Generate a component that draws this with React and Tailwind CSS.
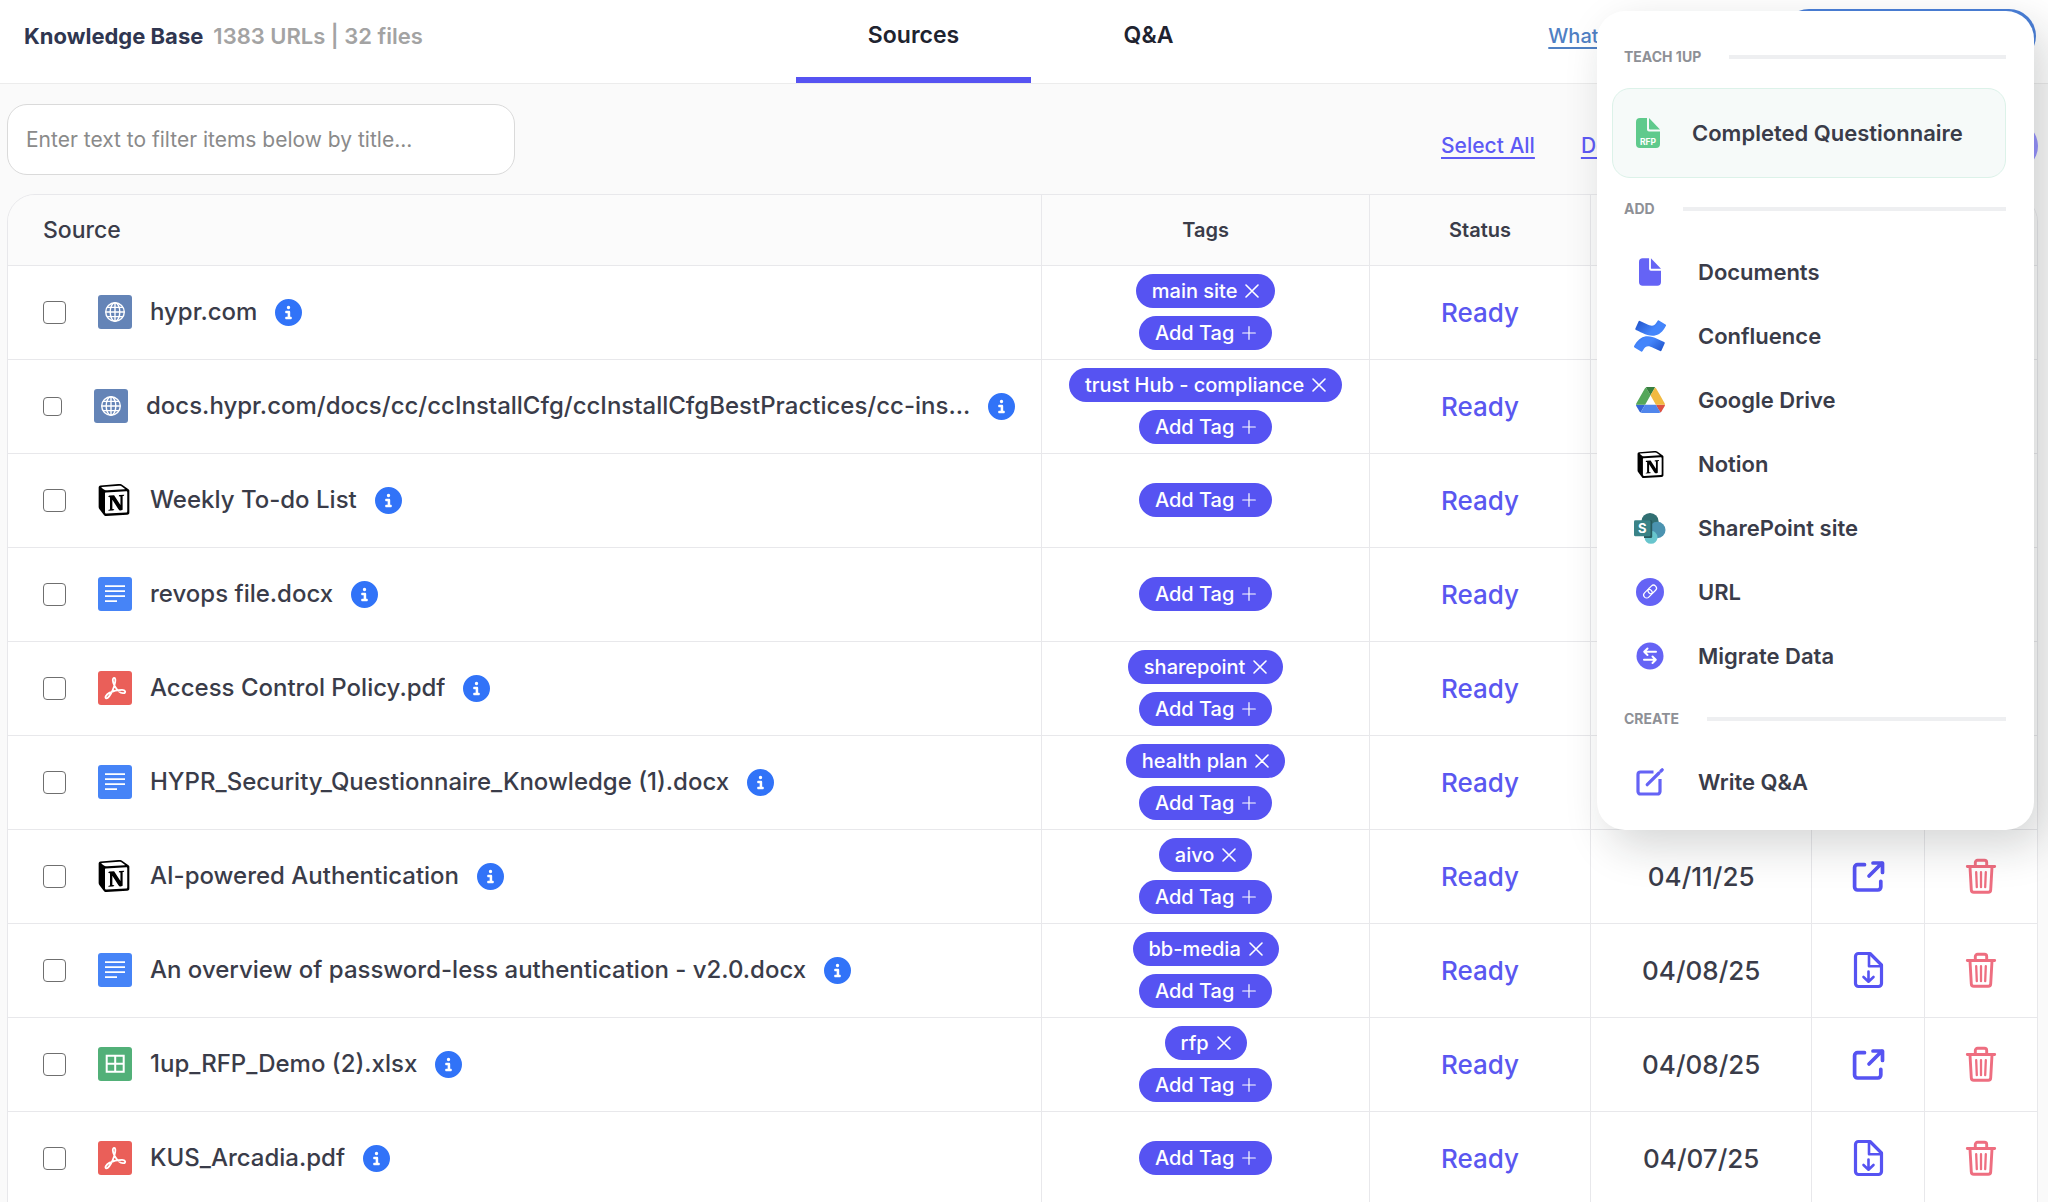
import React from 'react';
import { FaCircleInfo } from 'react-icons/fa6';
import { SiNotion, SiConfluence } from 'react-icons/si';

function GlobeIcon() {
  return (
    <svg viewBox="0 0 34 34" className="size-[34px] shrink-0" aria-hidden="true">
      <rect width="34" height="34" rx="3" fill="#6484b7" />
      <g fill="none" stroke="#fff" strokeWidth="1.4">
        <circle cx="17" cy="17" r="9.3" />
        <ellipse cx="17" cy="17" rx="4.8" ry="9.3" />
        <path d="M17 7.7v18.6M7.7 17h18.6M9 12.4h16M9 21.6h16" />
      </g>
    </svg>
  );
}

function DocIcon() {
  return (
    <svg viewBox="0 0 34 34" className="size-[34px] shrink-0" aria-hidden="true">
      <rect width="34" height="34" rx="3" fill="#4684f7" />
      <path d="M7 9.2h20M7 14.2h20M7 19.2h20M7 24.2h12" stroke="#fff" strokeWidth="1.8" />
    </svg>
  );
}

function PdfIcon() {
  return (
    <svg viewBox="0 0 34 34" className="size-[34px] shrink-0" aria-hidden="true">
      <rect width="34" height="34" rx="3" fill="#ea5f59" />
      <path
        d="M16.3 7c-2.2 0-1.8 4 .2 7.6s5.5 7.9 8.8 7.6 2-3.4-1.3-3.4c-4.5 0-9.6 1.4-12.7 3.1s-4.8 4.9-3.2 5.4 4.6-3.7 6.6-8.2S18.6 7 16.3 7z"
        fill="none"
        stroke="#fff"
        strokeWidth="1.8"
        strokeLinejoin="round"
      />
    </svg>
  );
}

function SheetIcon() {
  return (
    <svg viewBox="0 0 34 34" className="size-[34px] shrink-0" aria-hidden="true">
      <rect width="34" height="34" rx="3" fill="#52b078" />
      <path d="M8.7 8.8h17v16h-17zM17.2 8.8v16M8.7 16.8h17" fill="none" stroke="#fff" strokeWidth="2" />
    </svg>
  );
}

function NotionIcon() {
  return (
    <span className="flex size-[34px] shrink-0 items-center">
      <SiNotion className="size-8 text-black" aria-hidden="true" />
    </span>
  );
}

const sourceIcons = { web: GlobeIcon, notion: NotionIcon, doc: DocIcon, pdf: PdfIcon, sheet: SheetIcon };

function OpenIcon() {
  return (
    <svg viewBox="0 0 33 33" className="size-[33px]" fill="none" stroke="#5653f2" strokeWidth="3.7" strokeLinecap="round" strokeLinejoin="round" aria-hidden="true">
      <path d="M12.5 4.7H5.6a3 3 0 0 0-3 3V27a3 3 0 0 0 3 3h20.2a3 3 0 0 0 3-3v-5.7" />
      <path d="M17 16 30 3M21 3h9.500v9.400" />
    </svg>
  );
}

function DownloadIcon() {
  return (
    <svg viewBox="0 0 31 38" className="h-[38px] w-[31px]" fill="none" stroke="#5653f2" strokeWidth="3.2" strokeLinecap="round" strokeLinejoin="round" aria-hidden="true">
      <path d="M5.5 2.500h11.500L28.500 14v18.500a3 3 0 0 1-3 3h-20a3 3 0 0 1-3-3v-27a3 3 0 0 1 3-3z" />
      <path d="M16 3v12.2h12" strokeWidth="2.6" />
      <path d="M15.500 20.500v10M10.500 26l5 4.700 5-4.700" strokeWidth="2.6" />
    </svg>
  );
}

function TrashIcon() {
  return (
    <svg viewBox="0 0 32 37" className="h-[37px] w-8" fill="none" stroke="#ee6e80" strokeWidth="2.9" strokeLinecap="round" strokeLinejoin="round" aria-hidden="true">
      <path d="M2.300 8.500h27.400M10.300 8V4.500a2.200 2.200 0 0 1 2.200-2.200h7a2.200 2.200 0 0 1 2.200 2.200V8M5 9l1.300 22.800a2.500 2.500 0 0 0 2.500 2.500h14.400a2.500 2.500 0 0 0 2.500-2.500L27 9" />
      <path d="M11.200 14.200l.6 15M16 14.200v15M20.800 14.200l-.6 15" strokeWidth="2.3" />
    </svg>
  );
}

function FileShape({ color, label, className }) {
  return (
    <svg viewBox="0 0 24 30" className={className} aria-hidden="true">
      <path d="M4 0h7v11.500a2 2 0 0 0 2 2h11V26a4 4 0 0 1-4 4H4a4 4 0 0 1-4-4V4a4 4 0 0 1 4-4z" fill={color} />
      <path d="M13 0l11 11.500H14a1 1 0 0 1-1-1z" fill={color} />
      {label && (
        <text x="12" y="27" textAnchor="middle" fontSize="8.500" fontWeight="700" fontFamily="Inter, sans-serif" fill="#fff">
          {label}
        </text>
      )}
    </svg>
  );
}

function ConfluenceIcon() {
  return (
    <>
      <svg width="0" height="0" className="absolute" aria-hidden="true">
        <linearGradient id="confluence" x1="0" y1="0" x2="1" y2="1">
          <stop offset="0.1" stopColor="#2459d0" />
          <stop offset="0.45" stopColor="#4485fb" />
          <stop offset="0.6" stopColor="#4485fb" />
          <stop offset="0.9" stopColor="#2459d0" />
        </linearGradient>
      </svg>
      <SiConfluence className="size-8" style={{ fill: 'url(#confluence)' }} aria-hidden="true" />
    </>
  );
}

function DriveIcon() {
  return (
    <svg viewBox="0 0 87.3 78" className="h-[26px] w-[29px]" aria-hidden="true">
      <path d="m6.600 66.850 3.850 6.650c.8 1.400 1.950 2.500 3.300 3.300l13.750-23.800h-27.500c0 1.550.4 3.100 1.200 4.500z" fill="#3567d6" />
      <path d="m43.650 25-13.750-23.800c-1.350.8-2.500 1.900-3.300 3.300l-25.400 44a9.060 9.060 0 0 0 -1.200 4.500h27.500z" fill="#55a75a" />
      <path d="m73.550 76.800c1.350-.8 2.500-1.900 3.300-3.300l1.600-2.750 7.650-13.250c.8-1.400 1.200-2.950 1.200-4.500h-27.502l5.852 11.500z" fill="#dd5144" />
      <path d="m43.650 25 13.750-23.800c-1.350-.8-2.900-1.200-4.500-1.200h-18.500c-1.600 0-3.150.450-4.500 1.200z" fill="#377f3f" />
      <path d="m59.800 53h-32.300l-13.750 23.800c1.350.8 2.900 1.200 4.500 1.200h50.800c1.600 0 3.150-.450 4.500-1.200z" fill="#5086ec" />
      <path d="m73.400 26.500-12.700-22c-.8-1.400-1.950-2.500-3.300-3.300l-13.750 23.800 16.150 28h27.450c0-1.550-.4-3.100-1.200-4.500z" fill="#f2ba42" />
    </svg>
  );
}

function SharePointIcon() {
  return (
    <svg viewBox="0 0 32 31" className="h-[31px] w-8" aria-hidden="true">
      <circle cx="16" cy="8.700" r="8.700" fill="#316f72" />
      <circle cx="23.300" cy="17" r="8.200" fill="#4b93b0" />
      <circle cx="17" cy="24.300" r="6.500" fill="#68c5cd" />
      <path d="M10 7.300h6.800a1.400 1.400 0 0 1 1.400 1.400v15a1.400 1.400 0 0 1-1.400 1.400H10z" fill="#275a5e" />
      <rect x="0" y="7.300" width="16.500" height="16" rx="1.400" fill="#3a8387" />
      <text x="8.200" y="19.800" textAnchor="middle" fontSize="13" fontWeight="700" fontFamily="Inter, sans-serif" fill="#fff">
        S
      </text>
    </svg>
  );
}

function UrlIcon() {
  return (
    <svg viewBox="0 0 28 28" className="size-7" aria-hidden="true">
      <circle cx="14" cy="14" r="14" fill="#6563f5" />
      <g fill="none" stroke="#fff" strokeWidth="1.2" transform="rotate(-45 14 13.5)">
        <rect x="6.200" y="10.600" width="9.500" height="6" rx="3" />
        <rect x="12.300" y="10.600" width="9.500" height="6" rx="3" />
      </g>
    </svg>
  );
}

function MigrateIcon() {
  return (
    <svg viewBox="0 0 28 28" className="size-7" aria-hidden="true">
      <circle cx="14" cy="14" r="13.500" fill="#6563f5" />
      <path d="M20 9.700H8.200M11.500 6.500 8.200 9.700l3.300 3.300M8 17.700h11.800M16.500 14.500l3.300 3.200-3.300 3.300" fill="none" stroke="#fff" strokeWidth="2" strokeLinecap="round" strokeLinejoin="round" />
    </svg>
  );
}

function WriteIcon() {
  return (
    <svg viewBox="0 0 28 28" className="size-7" fill="none" stroke="#6563f5" strokeWidth="3.2" strokeLinejoin="round" aria-hidden="true">
      <path d="M17.500 4H4.500a2.500 2.500 0 0 0-2.500 2.500v17A2.500 2.500 0 0 0 4.500 26h17a2.500 2.500 0 0 0 2.500-2.500V11" />
      <path d="M11.200 16.700 23 5" strokeLinecap="round" />
      <path d="m25 3 1.200-1.200" strokeLinecap="round" />
    </svg>
  );
}

const rows = [
  { name: 'hypr.com', icon: 'web', tag: 'main site', action: 'open' },
  { name: 'docs.hypr.com/docs/cc/ccInstallCfg/ccInstallCfgBestPractices/cc-ins...', icon: 'web', tag: 'trust Hub - compliance', action: 'open', compact: true },
  { name: 'Weekly To-do List', icon: 'notion', action: 'open' },
  { name: 'revops file.docx', icon: 'doc', action: 'download' },
  { name: 'Access Control Policy.pdf', icon: 'pdf', tag: 'sharepoint', action: 'download' },
  { name: 'HYPR_Security_Questionnaire_Knowledge (1).docx', icon: 'doc', tag: 'health plan', action: 'download' },
  { name: 'AI-powered Authentication', icon: 'notion', tag: 'aivo', date: '04/11/25', action: 'open' },
  { name: 'An overview of password-less authentication - v2.0.docx', icon: 'doc', tag: 'bb-media', date: '04/08/25', action: 'download' },
  { name: '1up_RFP_Demo (2).xlsx', icon: 'sheet', tag: 'rfp', date: '04/08/25', action: 'open' },
  { name: 'KUS_Arcadia.pdf', icon: 'pdf', date: '04/07/25', action: 'download' },
];

const addItems = [
  ['Documents', <FileShape key="i" color="#6563f5" className="h-7 w-[22px]" />],
  ['Confluence', <ConfluenceIcon key="i" />],
  ['Google Drive', <DriveIcon key="i" />],
  ['Notion', <SiNotion key="i" className="size-[27px] text-black" aria-hidden="true" />],
  ['SharePoint site', <SharePointIcon key="i" />],
  ['URL', <UrlIcon key="i" />],
  ['Migrate Data', <MigrateIcon key="i" />],
];

function PlusIcon() {
  return (
    <svg viewBox="0 0 14 14" className="size-3.5" stroke="#fff" strokeWidth="1.2" strokeLinecap="round" aria-hidden="true">
      <path d="M7 .700v12.600M.700 7h12.600" />
    </svg>
  );
}

function CloseIcon() {
  return (
    <svg viewBox="0 0 14 14" className="size-3.5" stroke="#fff" strokeWidth="1.600" strokeLinecap="round" aria-hidden="true">
      <path d="M1 1l12 12M13 1 1 13" />
    </svg>
  );
}

function SourceRow({ row }) {
  const Icon = sourceIcons[row.icon];
  return (
    <tr className="h-[94px] border-t border-[#e8e8eb] bg-white">
      <td className="pr-4 pl-[35px]">
        <div className="flex items-center gap-[18px]">
          <input
            type="checkbox"
            aria-label={`Select ${row.name}`}
            className={`${row.compact ? 'size-[19px]' : 'size-[23px]'} mr-3.5 shrink-0 appearance-none rounded border border-[#6f6f6f] bg-white`}
          />
          <Icon />
          <span className="truncate text-2xl font-medium">{row.name}</span>
          <button type="button" aria-label="Source details" className="shrink-0 text-[#3173f8]">
            <FaCircleInfo className="size-[27px]" />
          </button>
        </div>
      </td>
      <td className="border-l border-[#e8e8eb]">
        <div className="flex flex-col items-center gap-2">
          {row.tag && (
            <span className="flex h-[34px] items-center gap-2 rounded-full bg-[#5653f2] px-4 text-xl font-medium text-white">
              {row.tag}
              <button type="button" aria-label={`Remove tag ${row.tag}`}>
                <CloseIcon />
              </button>
            </span>
          )}
          <button type="button" className="flex h-[34px] items-center gap-2 rounded-full bg-[#5653f2] px-4 text-xl font-medium text-white">
            Add Tag
            <PlusIcon />
          </button>
        </div>
      </td>
      <td className="border-l border-[#e8e8eb] text-center text-[26px] font-medium text-[#5a57f0]">Ready</td>
      <td className="border-l border-[#e8e8eb] text-center text-[26px] font-medium">{row.date}</td>
      <td className="border-l border-[#e8e8eb]">
        <button type="button" aria-label={row.action === 'open' ? 'Open source' : 'Download source'} className="mx-auto block">
          {row.action === 'open' ? <OpenIcon /> : <DownloadIcon />}
        </button>
      </td>
      <td className="border-l border-[#e8e8eb]">
        <button type="button" aria-label="Delete source" className="mx-auto block">
          <TrashIcon />
        </button>
      </td>
    </tr>
  );
}

function SectionLabel({ children }) {
  return (
    <div className="mr-7 ml-[27px] flex h-6 items-center gap-7">
      <span className="text-sm font-bold text-[#8e9096]">{children}</span>
      <span className="h-1 flex-1 bg-[#eeeff1]" />
    </div>
  );
}

function MenuItem({ icon, children }) {
  return (
    <button type="button" role="menuitem" className="flex h-16 w-full items-center gap-8 pl-[37px] text-left text-[22px] font-semibold">
      <span className="flex w-8 shrink-0 items-center justify-center">{icon}</span>
      {children}
    </button>
  );
}

function AddMenu() {
  return (
    <div role="menu" className="absolute top-[11px] right-3.5 z-10 w-[437px] rounded-[28px] bg-white pt-[34px] pb-4 shadow-[12px_16px_44px_rgba(20,30,30,0.18)]">
      <SectionLabel>TEACH 1UP</SectionLabel>
      <div className="my-[19px] mr-7 ml-[15px]">
        <button type="button" role="menuitem" className="flex h-[90px] w-full items-center gap-8 rounded-[18px] border border-[#dcf2e9] bg-[#f6faf9] pl-[23px] text-left text-[22px] font-semibold">
          <FileShape color="#5fca8c" label="RFP" className="h-[30px] w-6" />
          Completed Questionnaire
        </button>
      </div>
      <SectionLabel>ADD</SectionLabel>
      <div className="my-[19px]">
        {addItems.map(([label, icon]) => (
          <MenuItem key={label} icon={icon}>
            {label}
          </MenuItem>
        ))}
      </div>
      <SectionLabel>CREATE</SectionLabel>
      <div className="mt-[19px]">
        <MenuItem icon={<WriteIcon />}>Write Q&amp;A</MenuItem>
      </div>
    </div>
  );
}

export default function App() {
  return (
    <div className="relative h-screen overflow-hidden bg-[#fafafa] font-['Inter',sans-serif] text-[#3a3c49]">
      <header className="grid h-[84px] grid-cols-[1fr_auto_1fr] border-b border-[#ececec] bg-white">
        <h1 className="flex items-center gap-2.5 pb-[11px] pl-6 text-[22px] whitespace-nowrap">
          <span className="font-bold text-[#2f3650]">Knowledge Base</span>
          <span className="font-semibold text-[#a3a3a3]">1383 URLs | 32 files</span>
        </h1>
        <nav className="ml-3.5 flex text-[23px] font-semibold text-[#20232f]">
          <button type="button" className="w-[235px] border-b-[6px] border-[#5653f2] pb-1.5">
            Sources
          </button>
          <button type="button" className="w-[235px] border-b-[6px] border-transparent pb-1.5">
            Q&amp;A
          </button>
        </nav>
        <div className="flex items-center justify-end gap-[118px] pr-3 pb-[11px]">
          <a href="#new" className="text-xl font-medium text-[#4f80c4] underline underline-offset-4">
            What's New
          </a>
          <button type="button" aria-label="Add knowledge" className="h-[54px] w-[254px] rounded-full bg-[#4a7fd8]" />
        </div>
      </header>

      <main className="pr-2.5 pl-[7px]">
        <div className="flex items-center justify-between pt-5 pb-[19px]">
          <input
            type="text"
            aria-label="Filter items by title"
            placeholder="Enter text to filter items below by title..."
            className="h-[71px] w-[508px] rounded-[20px] border border-[#dadada] bg-white px-[18px] text-[21px] placeholder:text-[#8a8a8a]"
          />
          <div className="flex items-center pt-3 text-[21px] font-medium text-[#5d5af5]">
            <button type="button" className="mr-[46px] underline underline-offset-4">
              Select All
            </button>
            <button type="button" className="mr-[98px] underline underline-offset-4">
              Deselect All
            </button>
            <button type="button" aria-label="Bulk actions" className="h-[50px] w-60 rounded-full bg-[#9793ff]" />
          </div>
        </div>

        <div className="overflow-hidden rounded-t-[28px] border border-[#e8e8eb]">
          <table className="w-full table-fixed border-collapse">
            <colgroup>
              <col />
              <col className="w-[16.15%]" />
              <col className="w-[10.9%]" />
              <col className="w-[10.9%]" />
              <col className="w-[5.55%]" />
              <col className="w-[5.55%]" />
            </colgroup>
            <thead>
              <tr className="h-[70px] bg-[#fbfbfb]">
                <th className="pl-[35px] text-left text-[23px] font-medium">Source</th>
                <th className="border-l border-[#e8e8eb] text-xl font-semibold">Tags</th>
                <th className="border-l border-[#e8e8eb] text-xl font-semibold">Status</th>
                <th className="border-l border-[#e8e8eb]" aria-label="Updated" />
                <th className="border-l border-[#e8e8eb]" aria-label="Open" />
                <th className="border-l border-[#e8e8eb]" aria-label="Delete" />
              </tr>
            </thead>
            <tbody>
              {rows.map((row) => (
                <SourceRow key={row.name} row={row} />
              ))}
            </tbody>
          </table>
        </div>
      </main>

      <AddMenu />
    </div>
  );
}
